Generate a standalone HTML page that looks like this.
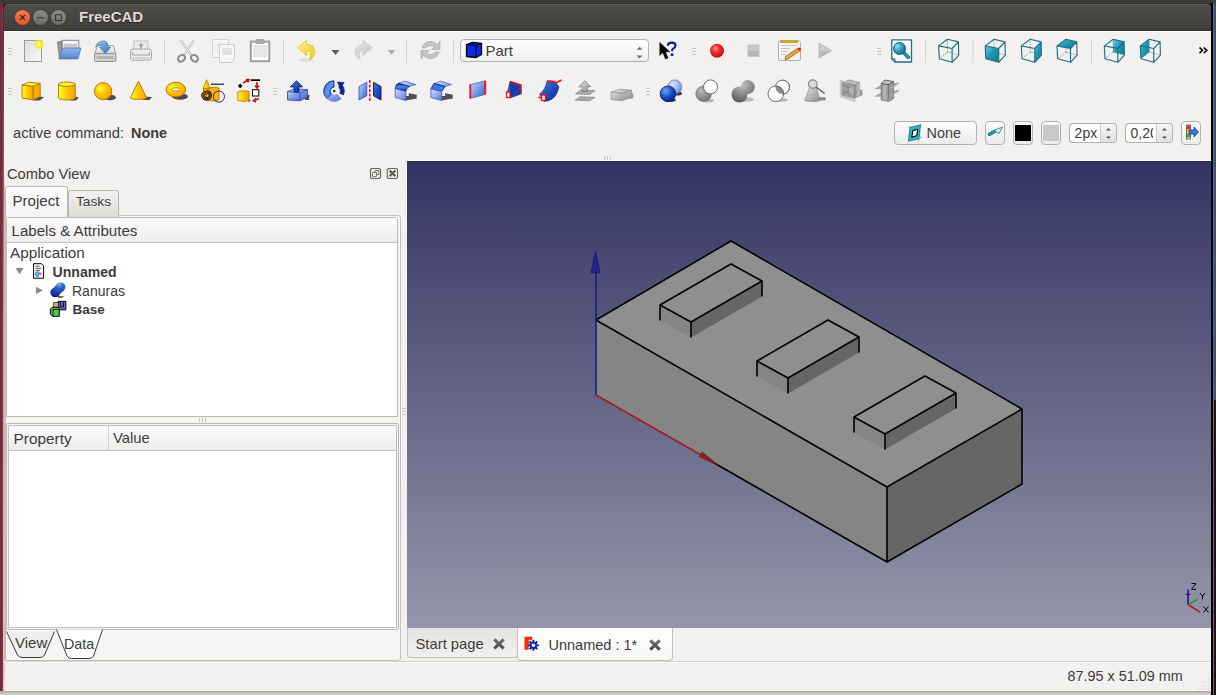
<!DOCTYPE html>
<html><head><meta charset="utf-8">
<style>
*{box-sizing:border-box}
html,body{margin:0;padding:0}
body{width:1216px;height:695px;overflow:hidden;position:relative;background:#f2f1f0;font-family:"Liberation Sans",sans-serif;color:#3c3c3c}
.a{position:absolute}
.t{position:absolute;white-space:pre;line-height:1}
svg{position:absolute;overflow:visible}
</style></head><body>
<!-- outer desktop edges -->
<div class="a" style="left:0;top:0;width:1216px;height:3px;background:#3b3a36"></div>
<div class="a" style="left:0;top:3px;width:2px;height:688px;background:#6e2c45"></div><div class="a" style="left:0;top:691px;width:3px;height:4px;background:#707890"></div>
<div class="a" style="left:2px;top:3px;width:1px;height:688px;background:#b8242a"></div>
<div class="a" style="left:3px;top:3px;width:1px;height:688px;background:linear-gradient(#2f3a36 0,#2f3a36 4%,#a9b0ad 50%,#c8cfcc 100%)"></div>
<div class="a" style="left:3px;top:3px;width:5px;height:3px;background:#6a0a10;clip-path:polygon(0 0,100% 0,0 100%)"></div>
<div class="a" style="left:1211px;top:3px;width:2px;height:692px;background:#000"></div>
<div class="a" style="left:1213px;top:3px;width:1px;height:692px;background:#6a6a6a"></div>
<div class="a" style="left:1214px;top:3px;width:2px;height:397px;background:#32528f"></div>
<div class="a" style="left:1214px;top:400px;width:2px;height:295px;background:#2a0b1f"></div>
<div class="a" style="left:0;top:691px;width:1211px;height:4px;background:linear-gradient(#a9a8a4,#d9d8d5)"></div>

<!-- title bar -->
<div class="a" style="left:1203px;top:3px;width:8px;height:6px;background:#000"></div><div class="a" style="left:3px;top:3px;width:6px;height:6px;background:#3a1018"></div>
<div class="a" style="left:4px;top:3px;width:1207px;height:1px;background:#33322e"></div><div class="a" style="left:4px;top:4px;width:1207px;height:27px;background:linear-gradient(#4e4d48,#484742 40%,#3f3e3a 95%,#2f2e2a);border-top:1px solid #5f5d58;border-radius:4px 4px 0 0"></div>
<div class="t" style="left:79px;top:9.3px;font-size:15px;font-weight:bold;color:#dfdbd2;text-shadow:0 1px 1px #262522">FreeCAD</div>

<!-- main window bg -->
<div class="a" style="left:4px;top:31px;width:1207px;height:660px;background:#f2f1f0"></div>
<div class="a" style="left:4px;top:31px;width:1207px;height:1px;background:#fcfcfb"></div>
<div class="a" style="left:4px;top:31px;width:1px;height:660px;background:linear-gradient(#fcfcfb 0,#fcfcfb 20%,#c0bcb8 25%,#c0bcb8 95%,#e8e8e8)"></div>



<!-- ===== TOOLBAR ROW 1 ===== -->
<svg style="left:0;top:0" width="1216" height="120">
<defs>
<linearGradient id="gDoc" x1="0" y1="0" x2="1" y2="1"><stop offset="0" stop-color="#dcdcdc"/><stop offset="1" stop-color="#fafafa"/></linearGradient>
<radialGradient id="gGlow"><stop offset="0" stop-color="#ffffe8"/><stop offset=".25" stop-color="#fbf84a"/><stop offset=".6" stop-color="#f3ee28" stop-opacity=".9"/><stop offset="1" stop-color="#f5ee20" stop-opacity="0"/></radialGradient>
<linearGradient id="gFold" x1="0" y1="0" x2="0" y2="1"><stop offset="0" stop-color="#8fb6e6"/><stop offset="1" stop-color="#4f86cc"/></linearGradient>
<linearGradient id="gDrive" x1="0" y1="0" x2="0" y2="1"><stop offset="0" stop-color="#fdfdfd"/><stop offset="1" stop-color="#d6d6d6"/></linearGradient>
<linearGradient id="gArrB" x1="0" y1="0" x2="1" y2="1"><stop offset="0" stop-color="#a9c6ea"/><stop offset="1" stop-color="#2d6cbd"/></linearGradient>
<linearGradient id="gUndo" x1="0" y1="0" x2="1" y2="1"><stop offset="0" stop-color="#fff59a"/><stop offset="1" stop-color="#e8cc10"/></linearGradient>
<linearGradient id="gRedo" x1="0" y1="0" x2="1" y2="1"><stop offset="0" stop-color="#e8e8e8"/><stop offset="1" stop-color="#bdbdbd"/></linearGradient>
<radialGradient id="gRec" cx=".4" cy=".35" r=".7"><stop offset="0" stop-color="#ff9a9a"/><stop offset=".4" stop-color="#ef2a2a"/><stop offset="1" stop-color="#b80f0f"/></radialGradient>
<radialGradient id="gTeal" cx=".3" cy=".3" r=".8"><stop offset="0" stop-color="#8fdcf2"/><stop offset=".6" stop-color="#2596b4"/><stop offset="1" stop-color="#11708a"/></radialGradient>
<linearGradient id="gTealF" x1="0" y1="0" x2="1" y2="1"><stop offset="0" stop-color="#6fcbe8"/><stop offset=".5" stop-color="#1e95b3"/><stop offset="1" stop-color="#137a93"/></linearGradient>

</defs>
<!-- grip -->
<g fill="#c9c6c2"><rect x="8" y="48" width="4" height="1"/><rect x="8" y="51" width="4" height="1"/><rect x="8" y="54" width="4" height="1"/></g>
<!-- new doc -->
<rect x="24.5" y="40.5" width="17" height="21" fill="url(#gDoc)" stroke="#9a9a9a" stroke-width="1"/>
<circle cx="39.2" cy="44.4" r="5.8" fill="url(#gGlow)"/>
<!-- open -->
<path d="M57.5 42 L62 41 L62 58 L59.5 59 Z" fill="#9a9a9a" stroke="#707070" stroke-width=".8"/>
<rect x="62.3" y="40.3" width="16.5" height="12" fill="#f0f0f0" stroke="#8a8a8a" stroke-width="1"/>
<rect x="64" y="42.5" width="13" height="5.5" fill="#c8c8c8"/><rect x="64" y="42" width="13" height="1.5" fill="#fff"/>
<path d="M62.6 48.1 L81 48.1 L77.9 58.9 L59.2 58.9 Z" fill="url(#gFold)" stroke="#4a7ab8" stroke-width=".8"/>
<!-- save -->
<path d="M97.6 45.5 L113.2 45.5 L115.8 53.6 L94.5 53.6 Z" fill="url(#gDrive)" stroke="#a0a0a0" stroke-width="1"/>
<rect x="94.5" y="53.6" width="21.3" height="7.9" rx="1" fill="#d4d4d4" stroke="#8e8e8e" stroke-width="1"/>
<rect x="96.5" y="56" width="17" height="3" fill="#b3b3b3"/>
<path d="M95.5 47 Q98 40 105 41 Q108.5 42 108 47 L111 47 L105.3 53.4 L99 47 L102.5 47 Q102.5 44 99 45 Z" fill="url(#gArrB)" stroke="#3a6fb0" stroke-width=".6"/>
<!-- print -->
<rect x="134" y="41" width="14" height="9" fill="#ececec" stroke="#bdbdbd" stroke-width="1"/>
<path d="M141 42.5 L138 46 L140 46 L140 49 L142 49 L142 46 L144 46 Z" fill="#a8a8a8"/>
<rect x="130.5" y="49" width="21" height="11.5" rx="2.5" fill="#ededed" stroke="#a8a8a8" stroke-width="1"/>
<path d="M132.5 52 L132.5 55 L149.5 55 L149.5 52" fill="none" stroke="#a0a0a0" stroke-width="1"/>
<rect x="131" y="57" width="20" height="3.5" fill="#d6d6d6"/>
<!-- sep -->
<rect x="164" y="39" width="1" height="24" fill="#d6d3cf"/>
<!-- cut -->
<path d="M180.5 39.8 L191 55 M194 39.8 L184 55" stroke="#b8b8b8" stroke-width="2.2" fill="none"/>
<path d="M180.5 39.8 L191 55 M194 39.8 L184 55" stroke="#f2f2f2" stroke-width="1" fill="none"/>
<ellipse cx="181.5" cy="58.3" rx="3.8" ry="3" transform="rotate(-40 181.5 58.3)" fill="none" stroke="#8a8a8a" stroke-width="2"/>
<ellipse cx="194.5" cy="58.3" rx="3.8" ry="3" transform="rotate(40 194.5 58.3)" fill="none" stroke="#8a8a8a" stroke-width="2"/>
<!-- copy -->
<rect x="212.5" y="39.5" width="16" height="18" fill="#f6f6f6" stroke="#d2d2d2" stroke-width="1"/>
<path d="M214 44 H222 M214 46 H222 M214 48 H222 M214 50 H222 M214 52 H222" stroke="#e2e2e2" stroke-width=".8"/>
<path d="M219.5 44.5 L234.5 44.5 L234.5 59 L231 62.5 L219.5 62.5 Z" fill="#f7f7f7" stroke="#cfcfcf" stroke-width="1"/>
<rect x="222" y="48" width="10" height="7" fill="#e0e0e0"/>
<!-- paste -->
<rect x="250.8" y="41.6" width="18.5" height="19.6" fill="#fbfbfb" stroke="#9e9e9e" stroke-width="2"/>
<rect x="253" y="45" width="14" height="12" fill="#e6e6e6"/>
<rect x="255.5" y="39" width="9" height="5" rx="1" fill="#a9a9a9"/>
<!-- sep -->
<rect x="283" y="39" width="1" height="24" fill="#d6d3cf"/>
<!-- undo -->
<ellipse cx="306" cy="60" rx="7" ry="1.6" fill="#000" opacity=".08"/>
<path d="M297.6 47.7 L306.8 40.3 L306.8 44.5 Q314.5 44.5 314.8 51.5 Q315 57 309.3 59.4 Q311.5 55.5 310.5 52.5 Q309.5 50.5 306.8 50.8 L306.8 55.7 Z" fill="url(#gUndo)" stroke="#d6c000" stroke-width=".7" stroke-linejoin="round"/>
<!-- dd1 -->
<path d="M331.5 50 L339.5 50 L335.5 55 Z" fill="#5a5a5a"/>
<!-- redo -->
<path d="M372.2 47.7 L363 40.3 L363 44.5 Q355.3 44.5 355 51.5 Q354.8 57 360.5 59.4 Q358.3 55.5 359.3 52.5 Q360.3 50.5 363 50.8 L363 55.7 Z" fill="url(#gRedo)" stroke="#c9c9c9" stroke-width=".7" stroke-linejoin="round"/>
<!-- dd2 -->
<path d="M387.6 50 L395.4 50 L391.5 55 Z" fill="#acacac"/>
<rect x="406" y="39" width="1" height="24" fill="#d6d3cf"/>
<!-- refresh -->
<path d="M422 48 Q424 41.5 430.5 41.5 Q435 41.5 437.5 44.5 L440 41 L440 49.5 L431.5 49.5 L434.5 47 Q433 45.5 430.5 45.5 Q427 45.5 426 48 Z" fill="#c4c4c4" stroke="#a9a9a9" stroke-width=".7"/>
<path d="M439 52 Q437 58.5 430.5 58.5 Q426 58.5 423.5 55.5 L421 59 L421 50.5 L429.5 50.5 L426.5 53 Q428 54.5 430.5 54.5 Q434 54.5 435 52 Z" fill="#c4c4c4" stroke="#a9a9a9" stroke-width=".7"/>
<rect x="453" y="39" width="1" height="24" fill="#d6d3cf"/>
<!-- workbench combo -->
<rect x="460.5" y="39.5" width="188" height="22" rx="3.5" fill="url(#gCombo)" stroke="#b4b1ac" stroke-width="1"/>
<linearGradient id="gCombo" x1="0" y1="0" x2="0" y2="1"><stop offset="0" stop-color="#ffffff"/><stop offset="1" stop-color="#eeeeed"/></linearGradient>
<path d="M466.5 44.5 L472.5 42.3 L481.5 43.3 L481.5 54.5 L476 57.5 L466.5 56.5 Z" fill="#0a28f0" stroke="#000" stroke-width="1.3" stroke-linejoin="round"/>
<path d="M466.5 44.5 L476 45.6 L481.5 43.3 M476 45.6 L476 57.5" fill="none" stroke="#000" stroke-width="1.1"/>
<path d="M636.7 49.8 L639.6 46.8 L642.5 49.8 Z" fill="#6e6e6e"/>
<path d="M636.7 55.6 L639.6 58.5 L642.5 55.6 Z" fill="#6e6e6e"/>
<!-- whats this -->
<path d="M659.8 42.5 L659.8 55.5 L662.8 52.5 L665.5 59 L668 58 L665.5 51.8 L669.8 51.8 Z" fill="#000" stroke="#000" stroke-width=".5" stroke-linejoin="round"/>
<path d="M667.8 45.8 Q668 42.6 671.8 42.6 Q675.5 42.6 675.5 45.6 Q675.5 47.6 673.2 48.6 Q672 49.2 672 51.2" fill="none" stroke="#0c1a8c" stroke-width="2.1"/>
<rect x="670.6" y="53.5" width="2.8" height="2.4" fill="#0c1a8c"/>
<!-- grip -->
<g fill="#c9c6c2"><rect x="692" y="48" width="4" height="1"/><rect x="692" y="51" width="4" height="1"/><rect x="692" y="54" width="4" height="1"/></g>
<!-- record -->
<circle cx="717" cy="50.7" r="7" fill="url(#gRec)"/>
<!-- stop -->
<rect x="748" y="45" width="11" height="11.3" fill="#c8c8c8" stroke="#bdbdbd" stroke-width=".8"/>
<rect x="748.5" y="51" width="10" height="5" fill="#b5b5b5"/>
<!-- macro edit -->
<rect x="778.5" y="41" width="22" height="19.5" rx="1.5" fill="#f4f4f4" stroke="#b0b0b0" stroke-width="1"/>
<rect x="780" y="40" width="18" height="3" fill="#c8a830"/>
<path d="M781 45.5 H797 M781 48.5 H790 M781 51.5 H788 M781 54.5 H786" stroke="#c6c6c6" stroke-width="1.2"/>
<path d="M785.5 56.5 L798 48 L800.5 50.5 L788 59 L785 59.5 Z" fill="#e8a838" stroke="#8a5a10" stroke-width=".7"/>
<circle cx="799.5" cy="49" r="1.6" fill="#e02020"/>
<!-- play -->
<path d="M819 43.2 L831.6 50.6 L819 58 Z" fill="#cdcdcd" stroke="#b0b0b0" stroke-width=".8"/>
<path d="M819.5 51 L830.5 51 L819.5 57.5 Z" fill="#b8b8b8"/>
<!-- grip -->
<g fill="#c9c6c2"><rect x="877" y="48" width="4" height="1"/><rect x="877" y="51" width="4" height="1"/><rect x="877" y="54" width="4" height="1"/></g>
<!-- fit -->
<path d="M891.8 39.8 L911.5 39.8 L911.5 62 L895 62 L891.8 58.8 Z" fill="#fff" stroke="#1f6f82" stroke-width="1.3" stroke-linejoin="round"/>
<path d="M891.8 58.8 L895 58.8 L895 62" fill="none" stroke="#1f6f82" stroke-width="1"/>
<path d="M903.5 52.5 L908.3 57.3" stroke="#145e70" stroke-width="3.6" stroke-linecap="round"/>
<path d="M903.5 52.5 L908.3 57.3" stroke="#2a9ab8" stroke-width="2" stroke-linecap="round"/>
<circle cx="899.5" cy="48.5" r="6" fill="url(#gTeal)" stroke="#0f5e72" stroke-width="1"/>
<rect x="925" y="39" width="1" height="24" fill="#d6d3cf"/>
<!-- iso -->
<g transform="translate(938.6 39.3)">
<path d="M8.9 0 L8.9 12.8 M8.9 12.8 L0.7 19.4 M8.9 12.8 L20.1 15.8" fill="none" stroke="#3a8396" stroke-width=".75" stroke-dasharray="1.2 1.1"/>
<path d="M0 6.6 L8.9 0 L19.8 2.6 L13.5 9.2 Z M13.5 9.2 L13.5 23 M0 6.6 L0.7 19.4 L13.5 23 L20.1 15.8 L19.8 2.6" fill="none" stroke="#1f6f82" stroke-width="1.15" stroke-linejoin="round"/>
</g>
<rect x="972.5" y="39" width="1" height="24" fill="#d6d3cf"/>
<!-- front -->
<g transform="translate(985.2 39.3)"><path d="M0 6.6 L13.5 9.2 L13.5 23 L0.7 19.4 Z" fill="url(#gTealF)"/>
<path d="M8.9 0 L8.9 12.8 M8.9 12.8 L0.7 19.4 M8.9 12.8 L20.1 15.8" fill="none" stroke="#3a8396" stroke-width=".75" stroke-dasharray="1.2 1.1"/>
<path d="M0 6.6 L8.9 0 L19.8 2.6 L13.5 9.2 Z M13.5 9.2 L13.5 23 M0 6.6 L0.7 19.4 L13.5 23 L20.1 15.8 L19.8 2.6" fill="none" stroke="#1f6f82" stroke-width="1.15" stroke-linejoin="round"/>
</g>
<!-- right -->
<g transform="translate(1021.3 39.3)"><path d="M13.5 9.2 L19.8 2.6 L20.1 15.8 L13.5 23 Z" fill="url(#gTealF)"/>
<path d="M8.9 0 L8.9 12.8 M8.9 12.8 L0.7 19.4 M8.9 12.8 L20.1 15.8" fill="none" stroke="#3a8396" stroke-width=".75" stroke-dasharray="1.2 1.1"/>
<path d="M0 6.6 L8.9 0 L19.8 2.6 L13.5 9.2 Z M13.5 9.2 L13.5 23 M0 6.6 L0.7 19.4 L13.5 23 L20.1 15.8 L19.8 2.6" fill="none" stroke="#1f6f82" stroke-width="1.15" stroke-linejoin="round"/>
</g>
<!-- top -->
<g transform="translate(1057 39.3)"><path d="M0 6.6 L8.9 0 L19.8 2.6 L13.5 9.2 Z" fill="url(#gTealF)"/>
<path d="M8.9 0 L8.9 12.8 M8.9 12.8 L0.7 19.4 M8.9 12.8 L20.1 15.8" fill="none" stroke="#3a8396" stroke-width=".75" stroke-dasharray="1.2 1.1"/>
<path d="M0 6.6 L8.9 0 L19.8 2.6 L13.5 9.2 Z M13.5 9.2 L13.5 23 M0 6.6 L0.7 19.4 L13.5 23 L20.1 15.8 L19.8 2.6" fill="none" stroke="#1f6f82" stroke-width="1.15" stroke-linejoin="round"/>
</g>
<rect x="1091" y="39" width="1" height="24" fill="#d6d3cf"/>
<!-- rear -->
<g transform="translate(1104.3 39.3)"><path d="M8.9 0 L19.8 2.6 L20.1 15.8 L8.9 12.8 Z" fill="url(#gTealF)"/>
<path d="M8.9 0 L8.9 12.8 M8.9 12.8 L0.7 19.4 M8.9 12.8 L20.1 15.8" fill="none" stroke="#3a8396" stroke-width=".75" stroke-dasharray="1.2 1.1"/>
<path d="M0 6.6 L8.9 0 L19.8 2.6 L13.5 9.2 Z M13.5 9.2 L13.5 23 M0 6.6 L0.7 19.4 L13.5 23 L20.1 15.8 L19.8 2.6" fill="none" stroke="#1f6f82" stroke-width="1.15" stroke-linejoin="round"/>
</g>
<!-- left -->
<g transform="translate(1140.3 39.3)"><path d="M0 6.6 L8.9 0 L8.9 12.8 L0.7 19.4 Z" fill="url(#gTealF)"/>
<path d="M8.9 0 L8.9 12.8 M8.9 12.8 L0.7 19.4 M8.9 12.8 L20.1 15.8" fill="none" stroke="#3a8396" stroke-width=".75" stroke-dasharray="1.2 1.1"/>
<path d="M0 6.6 L8.9 0 L19.8 2.6 L13.5 9.2 Z M13.5 9.2 L13.5 23 M0 6.6 L0.7 19.4 L13.5 23 L20.1 15.8 L19.8 2.6" fill="none" stroke="#1f6f82" stroke-width="1.15" stroke-linejoin="round"/>
</g>
<!-- chevron -->
<path d="M1199.5 47.5 L1202.5 50.3 L1199.5 53.1 M1203.8 47.5 L1206.8 50.3 L1203.8 53.1" fill="none" stroke="#000" stroke-width="1.6"/>
</svg>


<!-- title buttons -->
<svg style="left:0;top:0" width="80" height="32">
<defs>
<linearGradient id="gClose" x1="0" y1="0" x2="0" y2="1"><stop offset="0" stop-color="#f47a50"/><stop offset="1" stop-color="#e9541f"/></linearGradient>
<linearGradient id="gMin" x1="0" y1="0" x2="0" y2="1"><stop offset="0" stop-color="#8d8b86"/><stop offset="1" stop-color="#6c6a65"/></linearGradient>
</defs>
<circle cx="22.5" cy="17.5" r="8.3" fill="#3a3935"/>
<circle cx="22.5" cy="17.5" r="7.6" fill="url(#gClose)"/>
<path d="M20 15 L25 20 M25 15 L20 20" stroke="#3b2a22" stroke-width="1.2"/>
<circle cx="40.5" cy="17.5" r="8.3" fill="#3a3935"/>
<circle cx="40.5" cy="17.5" r="7.6" fill="url(#gMin)"/>
<rect x="37" y="17.1" width="7" height="1.2" fill="#3a3935"/>
<circle cx="58.5" cy="17.5" r="8.3" fill="#3a3935"/>
<circle cx="58.5" cy="17.5" r="7.6" fill="url(#gMin)"/>
<rect x="55.6" y="14.7" width="5.8" height="5.8" fill="none" stroke="#3a3935" stroke-width="1.1"/>
</svg>
<div class="t" style="left:485.5px;top:43.2px;font-size:15px">Part</div>


<!-- ===== TOOLBAR ROW 2 ===== -->
<svg style="left:0;top:0" width="1216" height="120">
<defs>
<linearGradient id="gY" x1="0" y1="0" x2="1" y2="0"><stop offset="0" stop-color="#ffff28"/><stop offset=".55" stop-color="#ffc000"/><stop offset="1" stop-color="#ffa400"/></linearGradient>
<linearGradient id="gYt" x1="0" y1="0" x2="1" y2="0"><stop offset="0" stop-color="#fff020"/><stop offset="1" stop-color="#ffd000"/></linearGradient>
<radialGradient id="gYs" cx=".35" cy=".35" r=".7"><stop offset="0" stop-color="#ffff30"/><stop offset=".5" stop-color="#ffc400"/><stop offset="1" stop-color="#ffa000"/></radialGradient>
<linearGradient id="gB" x1="0" y1="0" x2="1" y2="1"><stop offset="0" stop-color="#c8dcfa"/><stop offset=".6" stop-color="#6a8ee0"/><stop offset="1" stop-color="#4060c8"/></linearGradient>
<linearGradient id="gBd" x1="0" y1="0" x2="1" y2="1"><stop offset="0" stop-color="#3a78e0"/><stop offset="1" stop-color="#0a2a9a"/></linearGradient>
<radialGradient id="gBs" cx=".35" cy=".3" r=".75"><stop offset="0" stop-color="#70a8f0"/><stop offset=".55" stop-color="#1850c0"/><stop offset="1" stop-color="#0a1e80"/></radialGradient>
<radialGradient id="gBsl" cx=".35" cy=".3" r=".75"><stop offset="0" stop-color="#d8e6fa"/><stop offset="1" stop-color="#6a8ee0"/></radialGradient>
<radialGradient id="gGs" cx=".35" cy=".3" r=".8"><stop offset="0" stop-color="#b8b8b8"/><stop offset="1" stop-color="#6e6e6e"/></radialGradient>
<linearGradient id="gG" x1="0" y1="0" x2="1" y2="1"><stop offset="0" stop-color="#e6e6e6"/><stop offset="1" stop-color="#8a8a8a"/></linearGradient>
</defs>
<g fill="#c9c6c2"><rect x="8" y="88" width="4" height="1"/><rect x="8" y="91" width="4" height="1"/><rect x="8" y="94" width="4" height="1"/></g>
<!-- box -->
<path d="M33 96 L44 97 L40 100.5 L33 100.5 Z" fill="#4e4e4e"/>
<path d="M22.1 85 L33.2 86.3 L33.2 99.8 L22.1 98.2 Z" fill="url(#gY)" stroke="#a87400" stroke-width=".9" stroke-linejoin="round"/>
<path d="M33.2 86.3 L40.2 83.4 L40.2 96.6 L33.2 99.8 Z" fill="#ffaa00" stroke="#a87400" stroke-width=".9" stroke-linejoin="round"/>
<path d="M22.1 85 L28.7 82.2 L40.2 83.4 L33.2 86.3 Z" fill="#fff030" stroke="#a87400" stroke-width=".9" stroke-linejoin="round"/>
<!-- cylinder -->
<path d="M72 96 L79 97.5 L76 100.5 L70 100.5 Z" fill="#4e4e4e"/>
<path d="M58.5 84.2 L58.5 97.8 A8.35 2.2 0 0 0 75.2 97.8 L75.2 84.2 Z" fill="url(#gY)" stroke="#a87400" stroke-width=".9"/>
<ellipse cx="66.85" cy="84.2" rx="8.35" ry="2.2" fill="#fff030" stroke="#a87400" stroke-width=".9"/>
<!-- sphere -->
<ellipse cx="110" cy="97.5" rx="6" ry="2.8" fill="#4e4e4e"/>
<circle cx="103.1" cy="91.2" r="8.6" fill="url(#gYs)" stroke="#a87400" stroke-width=".9"/>
<!-- cone -->
<path d="M144 96.5 L152 97 L149.5 100 L143 100 Z" fill="#4e4e4e"/>
<path d="M138.5 81.3 L146.6 97.8 A8.15 1.6 0 0 1 130.3 97.8 Z" fill="url(#gY)" stroke="#a87400" stroke-width=".9" stroke-linejoin="round"/>
<!-- torus -->
<ellipse cx="180" cy="96.5" rx="8" ry="3.3" fill="#4e4e4e"/>
<ellipse cx="175.8" cy="89.6" rx="9.8" ry="7.4" fill="url(#gYs)" stroke="#a87400" stroke-width=".9"/>
<ellipse cx="175.8" cy="89.4" rx="4.4" ry="1.6" fill="#f0efee" stroke="#b88000" stroke-width=".8"/>
<!-- primitives -->
<path d="M203.5 88.3 L216.5 87.2 L219 88 L219 100 L213 101 L203.5 99.5 Z" fill="#ffb000" stroke="#a87400" stroke-width=".8"/>
<path d="M206.6 79.7 L210.3 88.3 L203 88.3 Z" fill="url(#gY)" stroke="#a87400" stroke-width=".7"/>
<rect x="211" y="83.6" width="13" height="1.2" fill="#1a1a1a"/>
<circle cx="206.6" cy="95.3" r="5" fill="#ffb000"/>
<path d="M206.6 90.5 A4.8 4.8 0 1 1 201.8 95.3 L201.8 94.5" fill="none" stroke="#111" stroke-width="1.1"/>
<path d="M201.8 94.5 A3.6 3.6 0 0 1 206.6 91.7 A3.5 3.5 0 1 1 203.3 95.5 A2.2 2.2 0 0 1 206.6 93 A2.3 2.3 0 1 1 204.6 95.5 A1.1 1.1 0 0 1 206.8 95" fill="none" stroke="#111" stroke-width="1"/>
<circle cx="218.9" cy="96.6" r="5.6" fill="none" stroke="#2a2f80" stroke-width="1"/>
<!-- shape builder -->
<path d="M240.2 83.5 L242.5 85.9 L240.2 88.3 L237.9 85.9 Z" fill="#000"/>
<path d="M243 83 L248 80 M246 79.5 L249 79.6 L248 82.3" stroke="#d01010" stroke-width="1.6" fill="none"/>
<rect x="250.8" y="79.3" width="9.2" height="1.7" fill="#000"/>
<path d="M257 82 L257 87 M255 85.5 L257 88 L259 85.5" stroke="#d01010" stroke-width="1.6" fill="none"/>
<rect x="252.5" y="89.7" width="6.3" height="6.3" fill="#fff" stroke="#000" stroke-width="1"/>
<path d="M259 98.5 L254 100.5 M256 98.3 L253.5 100.7 L256 102" stroke="#d01010" stroke-width="1.6" fill="none"/>
<path d="M249 99.5 L251 101 L248 102 Z" fill="#4e4e4e"/>
<path d="M237.8 92 L241.5 90.8 L249 91.2 L249 100 L245 101.6 L237.8 100.5 Z" fill="url(#gY)" stroke="#a87400" stroke-width=".8"/>
<g fill="#c9c6c2"><rect x="273" y="88" width="4" height="1"/><rect x="273" y="91" width="4" height="1"/><rect x="273" y="94" width="4" height="1"/></g>
<!-- extrude -->
<path d="M305 94 L309.5 95 L309 100 L305 100 Z" fill="#4e4e4e"/>
<path d="M287.5 91.5 L294.5 89 L307.5 89.5 L307.5 97 L300 100.8 L287.5 100 Z" fill="url(#gB)" stroke="#3040b0" stroke-width=".8" stroke-linejoin="round"/>
<path d="M287.5 91.5 L300 93 L307.5 89.5 M300 93 L300 100.8" fill="none" stroke="#3040b0" stroke-width=".8"/>
<path d="M296.5 80.7 L302.7 86.9 L299 86.9 L299 92 L294 92 L294 86.9 L290.2 86.9 Z" fill="url(#gBd)" stroke="#0a1a70" stroke-width=".8" stroke-linejoin="round"/>
<!-- revolve -->
<linearGradient id="gRv1" x1="0" y1="0" x2="1" y2="1"><stop offset="0" stop-color="#3a6ad8"/><stop offset=".5" stop-color="#5a9af0"/><stop offset="1" stop-color="#2a58c8"/></linearGradient>
<linearGradient id="gRv2" x1="0" y1="0" x2="1" y2="1"><stop offset="0" stop-color="#a8bcf0"/><stop offset="1" stop-color="#5a70d8"/></linearGradient>
<path d="M327.36 98.80 A10.3 10.3 0 0 1 333.84 80.81 L334.06 87.00 A4.1 4.1 0 0 0 331.48 94.17 Z" fill="url(#gRv1)" stroke="#0a1a60" stroke-width=".9" stroke-linejoin="round"/>
<path d="M341.09 98.75 A10.3 10.3 0 0 1 327.36 98.80 L331.48 94.17 A4.1 4.1 0 0 0 336.94 94.15 Z" fill="url(#gRv2)" stroke="#6a70d8" stroke-width=".7" stroke-linejoin="round"/>
<path d="M341.86 84.67 A10.0 10.0 0 0 1 343.47 94.85 L339.95 93.42 A6.2 6.2 0 0 0 338.95 87.11 Z" fill="#0a2a9a" stroke="#08166a" stroke-width=".7"/>
<path d="M337.4 82.0 L344.2 82.6 L340.2 88.2 Z" fill="#0a2a9a" stroke="#08166a" stroke-width=".6" stroke-linejoin="round"/>
<circle cx="334.2" cy="91.1" r="1.2" fill="#000a30"/>
<!-- mirror -->
<path d="M359 86.5 L366.8 82.3 L366.8 95.8 L359 100 Z" fill="url(#gB)" stroke="#3a4ac0" stroke-width=".8"/>
<path d="M373.5 82.3 L381 86.5 L381 100 L373.5 95.8 Z" fill="url(#gBd)" stroke="#0a1460" stroke-width=".9"/>
<path d="M369.8 80 L369.8 102.5" stroke="#ff1010" stroke-width="1.5" stroke-dasharray="3 1.5"/>
<!-- fillet -->
<linearGradient id="gFt" x1="0" y1="0" x2="1" y2="0"><stop offset="0" stop-color="#d6e4fa"/><stop offset="1" stop-color="#7890e0"/></linearGradient>
<linearGradient id="gFb" x1="0" y1="0" x2="0" y2="1"><stop offset="0" stop-color="#0a2aa8"/><stop offset=".45" stop-color="#4a8ae8"/><stop offset="1" stop-color="#08208a"/></linearGradient>
<linearGradient id="gFf" x1="0" y1="0" x2="1" y2="1"><stop offset="0" stop-color="#d0e2fb"/><stop offset="1" stop-color="#5a78d8"/></linearGradient>
<path d="M408.8 93.3 L416.7 94.8 L416.7 98.5 L405.9 100.6 L405.9 96 L408.8 96 Z" fill="#4e4e4e"/>
<path d="M398.5 83.2 L405 81 L416 84.6 L409.5 86.5 Z" fill="url(#gFt)" stroke="#5a60d8" stroke-width=".7" stroke-linejoin="round"/>
<path d="M395.2 88.8 Q395.5 84 398.5 83.2 L409.5 86.5 Q406.2 87.8 405.9 91.4 Z" fill="url(#gFb)" stroke="#0a1060" stroke-width=".7" stroke-linejoin="round"/>
<path d="M395.2 88.8 L405.9 91.4 L405.9 100.6 L395.2 97.5 Z" fill="url(#gFf)" stroke="#4a50d0" stroke-width=".8" stroke-linejoin="round"/>
<!-- chamfer -->
<path d="M445.2 93.3 L452.8 94.8 L452.8 98.5 L441.7 100.6 L441.7 96 L445.2 96 Z" fill="#4e4e4e"/>
<path d="M434.1 83.5 L440.9 81 L451.7 84.6 L445.2 86.4 Z" fill="url(#gFt)" stroke="#5a60d8" stroke-width=".7" stroke-linejoin="round"/>
<path d="M430.9 88.8 L434.1 83.5 L445.2 86.4 L441.7 91.4 Z" fill="#3a7ae0" stroke="#0a1060" stroke-width=".8" stroke-linejoin="round"/>
<path d="M430.9 88.8 L441.7 91.4 L441.7 100.6 L430.9 97.5 Z" fill="url(#gFf)" stroke="#4a50d0" stroke-width=".8" stroke-linejoin="round"/>
<!-- ruled -->
<path d="M470.3 84.6 L485.3 80.8 L485.3 94.4 L470.3 98.4 Z" fill="url(#gB)" stroke="#3a4ac0" stroke-width=".6"/>
<path d="M470.3 84.6 L470.3 98.4 M485.3 80.8 L485.3 94.4" stroke="#ff0a0a" stroke-width="1.8"/>
<!-- loft -->
<path d="M510 81.5 L521 85 L521 94 L510 98 L506.5 96 Z" fill="url(#gBd)" stroke="#1a2a90" stroke-width=".6"/>
<path d="M510 81.5 L521 85 L510 98 Z" fill="#1a3aa8"/>
<path d="M510 81.5 L521 85 L521 94" fill="none" stroke="#ff0a0a" stroke-width="1.5"/>
<rect x="506.5" y="92" width="3.5" height="5.5" fill="#fff" stroke="#ff0a0a" stroke-width="1.3"/>
<!-- sweep -->
<path d="M547 81 Q545.5 90 539.5 94 L544 101.5 Q556 101 559 87 L555 81.5 Z" fill="url(#gBd)" stroke="#1a2a90" stroke-width=".6"/>
<path d="M547 81 L555 81.5" stroke="#ff0a0a" stroke-width="1.5"/>
<path d="M555 83.5 L561.5 80" stroke="#ff0a0a" stroke-width="1.6"/>
<rect x="541.5" y="95" width="4" height="5.5" fill="#fff" stroke="#ff0a0a" stroke-width="1.4"/>
<path d="M538.5 97.5 L541.5 97.5" stroke="#ff0a0a" stroke-width="1.6"/>
<!-- offset -->
<path d="M575.5 94 L580.5 90 L595 90.5 L590 94.5 Z" fill="#a9a9a9" stroke="#7a7a7a" stroke-width=".6" stroke-linejoin="round"/>
<path d="M575.2 100.2 L580.3 96.7 L595.2 97.3 L589.5 100.8 Z" fill="#a9a9a9" stroke="#7a7a7a" stroke-width=".6" stroke-linejoin="round"/>
<path d="M584.8 80.6 L590.8 86.9 L587.3 86.9 L587.3 91.5 L582.3 91.5 L582.3 86.9 L578.8 86.9 Z" fill="url(#gG)" stroke="#6a6a6a" stroke-width=".6" stroke-linejoin="round"/>
<!-- thickness -->
<path d="M630 93 L633.4 93.5 L633.4 98 L630 99 Z" fill="#9a9a9a"/>
<path d="M611 92 L620 89.2 L631.5 90.2 L631.5 97.5 L622 100.8 L611 99.5 Z" fill="url(#gG)" stroke="#8a8a8a" stroke-width=".6"/>
<path d="M611 92 L622 93.3 L631.5 90.2" fill="none" stroke="#8a8a8a" stroke-width=".7"/>
<g fill="#c9c6c2"><rect x="646" y="88" width="4" height="1"/><rect x="646" y="91" width="4" height="1"/><rect x="646" y="94" width="4" height="1"/></g>
<!-- boolean -->
<ellipse cx="677" cy="93.5" rx="5" ry="2" fill="#3a3a3a"/>
<circle cx="674.8" cy="86.9" r="7" fill="url(#gBsl)" stroke="#6a7ad8" stroke-width=".8"/>
<ellipse cx="670" cy="100" rx="6" ry="2" fill="#3a3a3a"/>
<circle cx="667.9" cy="93.8" r="7.8" fill="url(#gBs)" stroke="#0a1a70" stroke-width=".8"/>
<!-- cut -->
<ellipse cx="708" cy="100.5" rx="6" ry="1.8" fill="#8a8a8a" opacity=".6"/>
<circle cx="703.6" cy="93.8" r="7.8" fill="url(#gGs)" stroke="#6a6a6a" stroke-width=".6"/>
<circle cx="710.5" cy="86.9" r="7" fill="#fff" stroke="#6a6a6a" stroke-width="1"/>
<!-- fuse -->
<radialGradient id="gFuse" gradientUnits="userSpaceOnUse" cx="742" cy="84" r="18"><stop offset="0" stop-color="#c4c4c4"/><stop offset="1" stop-color="#5e5e5e"/></radialGradient>
<ellipse cx="746" cy="99.5" rx="8" ry="2.2" fill="#8a8a8a" opacity=".55"/>
<circle cx="747.7" cy="87.1" r="7" fill="url(#gFuse)"/>
<circle cx="739.5" cy="94.5" r="8" fill="url(#gFuse)"/>
<path d="M742 89 L747 92 L742 95 Z" fill="url(#gFuse)"/>
<!-- common -->
<clipPath id="cpC1"><circle cx="782.5" cy="87.1" r="7"/></clipPath>
<ellipse cx="782" cy="100" rx="6" ry="1.8" fill="#8a8a8a" opacity=".55"/>
<circle cx="782.5" cy="87.1" r="7" fill="#fff" stroke="#707070" stroke-width="1"/>
<circle cx="775.8" cy="93.8" r="7.8" fill="#fff" stroke="#707070" stroke-width="1"/>
<circle cx="775.8" cy="93.8" r="7.8" fill="#8e8e8e" stroke="#6a6a6a" stroke-width="1" clip-path="url(#cpC1)"/>
<path d="M782.5 80.1 A7 7 0 0 1 782.5 94.1" fill="none" stroke="#707070" stroke-width="1"/>
<!-- section -->
<path d="M818 97 L826 97.5 L825 100.5 L818 100.5 Z" fill="#8a8a8a"/>
<path d="M810 86.5 L816 86.5 L820 100.5 A8 1.5 0 0 1 804.7 100.5 Z" fill="url(#gG)" stroke="#7a7a7a" stroke-width=".6"/>
<circle cx="812.8" cy="84.1" r="4.3" fill="#d8d8d8" stroke="#8a8a8a" stroke-width="1.2"/>
<path d="M816 87 L824.7 93.5" stroke="#555" stroke-width="1.2"/>
<!-- cross sections -->
<linearGradient id="gCs" x1="0" y1="0" x2="1" y2="0"><stop offset="0" stop-color="#8a8a8a"/><stop offset="1" stop-color="#c8c8c8"/></linearGradient>
<path d="M840.3 80.3 L843 81 L843 96 L855.2 99.8 L855.2 101.5 L840.3 96.8 Z" fill="#d8d8d8" stroke="#a8a8a8" stroke-width=".6"/>
<path d="M859.6 89.6 L862.4 89.6 L862.4 95.5 L859.6 96.1 Z" fill="#9a9a9a"/>
<path d="M842 82.8 L848.8 79.8 L859.6 82.2 L854.5 85 Z" fill="#b8b8b8" stroke="#8a8a8a" stroke-width=".5"/>
<path d="M854.5 85 L859.6 82.2 L859.6 96.1 L854.5 98.3 Z" fill="url(#gCs)" stroke="#8a8a8a" stroke-width=".5"/>
<path d="M842 82.8 L854.5 85 L854.5 98.3 L842 95 Z" fill="#a4a4a4" stroke="#7a7a7a" stroke-width=".6"/>
<path d="M843.5 84.5 L853 86.2 L853 96.5 L843.5 93.8 Z" fill="#9a9a9a"/>
<path d="M843.5 84.5 L848.8 88 L853 86.2 M848.8 88 L848.8 91.7 L843.5 93.8 M848.8 91.7 L853 96.5" fill="none" stroke="#6e6e6e" stroke-width=".8"/>
<path d="M848.8 88 L853 86.2 L853 96.5 L848.8 91.7 Z" fill="#b4b4b4"/>
<!-- compound -->
<linearGradient id="gCp" x1="0" y1="0" x2="1" y2="0"><stop offset="0" stop-color="#8e8e8e"/><stop offset=".5" stop-color="#bcbcbc"/><stop offset="1" stop-color="#8a8a8a"/></linearGradient>
<path d="M875.4 88.8 L883 84.2 L899 83.1 L891.5 88.3 Z" fill="#b0b0b0" stroke="#8a8a8a" stroke-width=".6" stroke-linejoin="round"/>
<path d="M875.4 96.3 L883 91.7 L899 90.6 L891.5 95.8 Z" fill="#b0b0b0" stroke="#8a8a8a" stroke-width=".6" stroke-linejoin="round"/>
<path d="M881.1 83.5 L888.5 84.6 L888.5 101.5 L881.1 100 Z" fill="url(#gCp)" stroke="#6a6a6a" stroke-width=".6"/>
<path d="M888.5 84.6 L893.5 81.5 L893.5 98.5 L888.5 101.5 Z" fill="#9a9a9a" stroke="#6a6a6a" stroke-width=".6"/>
<path d="M881.1 83.5 L885 80 L893.5 81.5 L888.5 84.6 Z" fill="#c0c0c0" stroke="#5a5a5a" stroke-width=".9" stroke-linejoin="round"/>
<path d="M888.5 88.3 L899 83.1 L891.5 88.3 Z M888.5 95.8 L899 90.6 L891.5 95.8 Z" fill="#b0b0b0"/>
<path d="M884 99.5 L896 96.5 L892 100.5 L886 101.5 Z" fill="#9a9a9a" opacity=".7"/>
</svg>

<!-- active command row -->
<div class="t" style="left:13px;top:125.6px;font-size:14.7px">active command:</div>
<div class="t" style="left:131px;top:125.8px;font-size:14.4px;font-weight:bold">None</div>


<!-- draft tray right -->
<svg style="left:880px;top:110px" width="336" height="45">
<defs>
<linearGradient id="gBtn" x1="0" y1="0" x2="0" y2="1"><stop offset="0" stop-color="#fdfdfd"/><stop offset="1" stop-color="#ecebea"/></linearGradient>
<linearGradient id="gSpinR" x1="0" y1="0" x2="0" y2="1"><stop offset="0" stop-color="#f7f7f6"/><stop offset="1" stop-color="#e2e1df"/></linearGradient>
</defs>
<rect x="14.5" y="11.5" width="82" height="23" rx="3.5" fill="url(#gBtn)" stroke="#b4b1ac"/>
<!-- plane icon -->
<path d="M30 17.5 L40.5 14.8 L39 28.8 L28.5 31 Z" fill="#2ab8c8" stroke="#0d6a78" stroke-width=".8" stroke-linejoin="round"/>
<path d="M32.8 20.8 L37.8 19.2 L36.8 25.6 L31.8 27.4 Z" fill="#fff" stroke="#000" stroke-width="1.1" stroke-linejoin="round"/>
<path d="M29 16 L30.5 19 M41.5 14 L40 17 M28 32.5 L29 29.5 M38.5 31.5 L39 28 M27.5 26 L30 25.5 M40 27.5 L42 27" stroke="#1c8a9a" stroke-width=".6"/>
<rect x="105.5" y="11.5" width="19" height="23" rx="3.5" fill="url(#gBtn)" stroke="#b4b1ac"/>
<path d="M109.5 24.2 L115.2 21" stroke="#0a6a70" stroke-width="3.4" stroke-linecap="round"/>
<path d="M109.5 24.2 L115.2 21" stroke="#20b0b0" stroke-width="1.8" stroke-linecap="round"/>
<path d="M113.5 20.5 L122.5 17 L119 23.5 Z" fill="#c8f0ea" stroke="#1a7a78" stroke-width=".8" stroke-linejoin="round"/>
<rect x="133.5" y="11.5" width="19" height="23" rx="3.5" fill="url(#gBtn)" stroke="#b4b1ac"/>
<rect x="135" y="15" width="16" height="16" fill="#000"/>
<rect x="161.5" y="11.5" width="19" height="23" rx="3.5" fill="url(#gBtn)" stroke="#b4b1ac"/>
<rect x="163" y="15" width="16" height="16" fill="#c8c8c8"/>
<!-- spin 2px -->
<rect x="189.5" y="13.5" width="47" height="19" rx="3" fill="#fff" stroke="#b4b1ac"/>
<path d="M220.5 14 L236 14 L236 32 L220.5 32 Z" fill="url(#gSpinR)"/>
<path d="M220.5 14 L220.5 32" stroke="#cdcac5"/>
<rect x="189.5" y="13.5" width="47" height="19" rx="3" fill="none" stroke="#b4b1ac"/>
<path d="M226 20.5 L228.5 18 L231 20.5 Z M226 26.5 L228.5 29 L231 26.5 Z" fill="#555"/>
<!-- spin 0,20 -->
<rect x="245.5" y="13.5" width="47" height="19" rx="3" fill="#fff" stroke="#b4b1ac"/>
<path d="M276.5 14 L292 14 L292 32 L276.5 32 Z" fill="url(#gSpinR)"/>
<path d="M276.5 14 L276.5 32" stroke="#cdcac5"/>
<rect x="245.5" y="13.5" width="47" height="19" rx="3" fill="none" stroke="#b4b1ac"/>
<path d="M282 20.5 L284.5 18 L287 20.5 Z M282 26.5 L284.5 29 L287 26.5 Z" fill="#555"/>
<!-- last button -->
<rect x="301.5" y="11.5" width="19" height="23" rx="3.5" fill="url(#gBtn)" stroke="#b4b1ac"/>
<rect x="307" y="15.5" width="3" height="4" fill="#ff2020"/>
<rect x="307" y="19.5" width="3" height="4" fill="#ffd800"/>
<rect x="307" y="23.5" width="3" height="4" fill="#20c020"/>
<rect x="306.5" y="15" width="4" height="14" fill="none" stroke="#333" stroke-width=".7"/>
<path d="M309 20 L314 20 L314 17 L318.5 22 L314 27 L314 24 L309 24 Z" fill="#3a7ad8" stroke="#0a2a8a" stroke-width=".7"/>
</svg>
<div class="t" style="left:926.6px;top:125.8px;font-size:14.4px">None</div>
<div class="t" style="left:1074.6px;top:125.9px;font-size:14px">2px</div>
<div class="a" style="left:1130px;top:125px;width:23px;height:17px;overflow:hidden"><div class="t" style="left:0.5px;top:0.9px;font-size:14px">0,20</div></div>

<!-- left dock -->
<div class="t" style="left:7px;top:166.5px;font-size:14.7px">Combo View</div>
<div class="a" style="left:5px;top:215px;width:396px;height:446px;background:#f5f5f4;border:1px solid #c5c2bd;border-radius:3px"></div>
<!-- tabs -->
<div class="a" style="left:68px;top:190px;width:51px;height:27px;background:linear-gradient(#f3f2f1,#dddbd8);border:1px solid #bab6b0;border-bottom:none;border-radius:3px 3px 0 0"></div>
<div class="t" style="left:76px;top:195.1px;font-size:13.7px">Tasks</div>
<div class="a" style="left:5px;top:186px;width:63px;height:32px;background:linear-gradient(#fdfdfd,#f4f4f4);border:1px solid #bab6b0;border-bottom:none;border-radius:3px 3px 0 0"></div>
<div class="t" style="left:12.5px;top:193.0px;font-size:15.1px">Project</div>
<!-- tree frame -->
<div class="a" style="left:6px;top:217px;width:392px;height:200px;background:#fff;border:1px solid #bcb8b3;border-radius:2px 3px 0 0"></div>
<div class="a" style="left:7px;top:218px;width:390px;height:25px;background:linear-gradient(#fbfbfb,#eeedec);border-bottom:1px solid #c3c0bb"></div>
<div class="t" style="left:11.5px;top:223.0px;font-size:15.1px">Labels &amp; Attributes</div>
<div class="t" style="left:10px;top:244.8px;font-size:15.3px">Application</div>
<div class="t" style="left:52.5px;top:264.8px;font-size:14.1px;font-weight:bold">Unnamed</div>
<div class="t" style="left:72px;top:283.7px;font-size:14px">Ranuras</div>
<div class="t" style="left:72.5px;top:303.1px;font-size:13.5px;font-weight:bold">Base</div>
<!-- splitter -->

<div class="a" style="left:199px;top:418px;width:1px;height:4px;background:#c9c6c2"></div>
<div class="a" style="left:202px;top:418px;width:1px;height:4px;background:#c9c6c2"></div>
<div class="a" style="left:205px;top:418px;width:1px;height:4px;background:#c9c6c2"></div>
<!-- property frame -->
<div class="a" style="left:6px;top:423px;width:393px;height:207px;background:#f5f5f5;border:1px solid #bcb8b3;border-radius:2px"></div>
<div class="a" style="left:8px;top:425px;width:389px;height:203px;background:#fff;border:1px solid #c3c0bb"></div>
<div class="a" style="left:9px;top:426px;width:387px;height:25px;background:linear-gradient(#fbfbfb,#eeedec);border-bottom:1px solid #c3c0bb"></div>
<div class="a" style="left:108px;top:426px;width:1px;height:24px;background:#d3d0cc"></div>
<div class="t" style="left:13.5px;top:430.8px;font-size:15.4px">Property</div>
<div class="t" style="left:113px;top:431.3px;font-size:14.8px">Value</div>
<!-- view/data tabs -->

<svg style="left:0;top:0" width="420" height="695">
<path d="M6.5 631.5 L17.5 655 Q19 657.5 22 657.5 L40 657.5 Q43 657.5 44.5 655 L54.5 631.5" fill="#efeeed" stroke="#3a3a3a" stroke-width="1"/>
<path d="M56.5 629.5 L67 656 Q68.5 658.5 71.5 658.5 L89 658.5 Q92 658.5 93.5 656 L102.5 629.5" fill="#fff" stroke="#3a3a3a" stroke-width="1"/>
</svg>
<div class="t" style="left:15px;top:634.9px;font-size:15px">View</div>
<div class="t" style="left:64px;top:636.5px;font-size:14.3px">Data</div>

<!-- viewport -->

<div class="a" style="left:407px;top:160px;width:804px;height:1px;background:#fff"></div>
<div class="a" style="left:407px;top:161px;width:804px;height:467px;background:linear-gradient(#343464,#9596a9)"></div>
<div class="a" style="left:407px;top:161px;width:804px;height:1px;background:#24245a"></div>
<div class="a" style="left:604px;top:156px;width:1px;height:4px;background:#c9c6c2"></div>
<div class="a" style="left:607px;top:156px;width:1px;height:4px;background:#c9c6c2"></div>
<div class="a" style="left:610px;top:156px;width:1px;height:4px;background:#c9c6c2"></div>
<div class="a" style="left:402px;top:408px;width:4px;height:1px;background:#c9c6c2"></div>
<div class="a" style="left:402px;top:411px;width:4px;height:1px;background:#c9c6c2"></div>
<div class="a" style="left:402px;top:414px;width:4px;height:1px;background:#c9c6c2"></div>


<!-- 3D scene -->
<svg style="left:0;top:0" width="1216" height="695">
<g stroke-linejoin="round">
<!-- main box -->
<path d="M596 320 L887 487 L887 562 L596 395 Z" fill="#858585"/>
<path d="M887 487 L1022 409 L1022 484 L887 562 Z" fill="#666666"/>
<path d="M731 241 L596 320 L887 487 L1022 409 Z" fill="#8f8f8f"/>
</g>
<g id="bump">
<path d="M660 305 L691 322 L691 337.5 L660 320.5 Z" fill="#858585"/>
<path d="M691 322 L762 281 L762 296.5 L691 337.5 Z" fill="#666666"/>
<path d="M731 264 L660 305 L691 322 L762 281 Z" fill="#8f8f8f" stroke="#000" stroke-width="1.6" stroke-linejoin="round"/>
<path d="M660 305 L660 320.5 M691 322 L691 337.5 M762 281 L762 296.5" stroke="#000" stroke-width="1.6"/>
</g>
<g transform="translate(97 56)">
<path d="M660 305 L691 322 L691 337.5 L660 320.5 Z" fill="#858585"/>
<path d="M691 322 L762 281 L762 296.5 L691 337.5 Z" fill="#666666"/>
<path d="M731 264 L660 305 L691 322 L762 281 Z" fill="#8f8f8f" stroke="#000" stroke-width="1.6" stroke-linejoin="round"/>
<path d="M660 305 L660 320.5 M691 322 L691 337.5 M762 281 L762 296.5" stroke="#000" stroke-width="1.6"/>
</g>
<g transform="translate(194 112)">
<path d="M660 305 L691 322 L691 337.5 L660 320.5 Z" fill="#858585"/>
<path d="M691 322 L762 281 L762 296.5 L691 337.5 Z" fill="#666666"/>
<path d="M731 264 L660 305 L691 322 L762 281 Z" fill="#8f8f8f" stroke="#000" stroke-width="1.6" stroke-linejoin="round"/>
<path d="M660 305 L660 320.5 M691 322 L691 337.5 M762 281 L762 296.5" stroke="#000" stroke-width="1.6"/>
</g>
<g fill="none" stroke="#000" stroke-width="1.6" stroke-linejoin="round">
<path d="M596 320 L731 241 L1022 409 L887 487 Z"/>
<path d="M887 487 L887 562 L1022 484 L1022 409"/>
<path d="M702 456 L887 562"/>
</g>
<!-- axes -->
<path d="M596 395 L701 455" stroke="#a01c1c" stroke-width="1.5"/>
<path d="M718.4 465.3 L699.4 456.7 L702.2 452.1 Z" fill="#8a2222" stroke="#6a1010" stroke-width=".6"/>
<path d="M596 395 L596 272" stroke="#1c1c8c" stroke-width="1.6"/>
<path d="M595.6 251 L600 272.8 L591 272.8 Z" fill="#222288" stroke="#10106a" stroke-width=".6"/>
<!-- axis cross -->
<path d="M1188.1 604.5 L1188.1 589.4" stroke="#1a1a9a" stroke-width="1.6"/>
<path d="M1186 594.5 L1190.2 594.5" stroke="#1a1a9a" stroke-width="1.4"/>
<path d="M1188.1 604.5 L1197.6 599.3" stroke="#10a010" stroke-width="1.4"/>
<path d="M1188.1 604.5 L1200.2 612.3" stroke="#a01c1c" stroke-width="1.5"/>
<path d="M1191.5 583.5 L1196 583.5 L1191.5 589.5 L1196 589.5" fill="none" stroke="#000" stroke-width="1"/>
<path d="M1200 593 L1202.5 596 L1205 593 M1202.5 596 L1202.5 599.5" fill="none" stroke="#000" stroke-width="1"/>
<path d="M1203.5 606.5 L1208.5 612.5 M1208.5 606.5 L1203.5 612.5" fill="none" stroke="#000" stroke-width="1"/>
</svg>

<!-- doc tabs -->
<div class="a" style="left:407px;top:628px;width:804px;height:30px;background:#f2f1f0"></div>

<div class="a" style="left:407px;top:628px;width:111px;height:30px;background:linear-gradient(#e4e3e1,#f1f0ef);border:1px solid #c6c3be;border-top:none;border-radius:0 0 4px 4px"></div>
<div class="t" style="left:415.5px;top:636.5px;font-size:14.8px">Start page</div>
<div class="a" style="left:517px;top:628px;width:156px;height:33px;background:linear-gradient(#fdfdfd,#f7f7f6);border:1px solid #c6c3be;border-top:none;border-radius:0 0 4px 4px"></div>
<div class="t" style="left:548.5px;top:637.6px;font-size:14.5px">Unnamed : 1*</div>

<!-- status bar -->
<div class="a" style="left:4px;top:661px;width:1207px;height:1px;background:#d8d5d0"></div>
<div class="a" style="left:4px;top:662px;width:1207px;height:1px;background:#fff"></div>
<div class="t" style="left:1067.5px;top:669.1px;font-size:14.4px">87.95 x 51.09 mm</div>


<!-- dock icons -->
<svg style="left:0;top:0" width="700" height="695">
<defs>
<radialGradient id="gBlob" gradientUnits="userSpaceOnUse" cx="59" cy="284" r="13"><stop offset="0" stop-color="#80b0f0"/><stop offset=".35" stop-color="#2a60d0"/><stop offset="1" stop-color="#0a2090"/></radialGradient>
<linearGradient id="gX" x1="0" y1="0" x2="0" y2="1"><stop offset="0" stop-color="#6e6e6e"/><stop offset="1" stop-color="#4a4a4a"/></linearGradient>
</defs>
<!-- float -->
<path d="M371.5 168.5 L379.5 168.5 L380.5 169.5 L380.5 177.5 L379.5 178.5 L371.5 178.5 L370.5 177.5 L370.5 169.5 Z" fill="none" stroke="#67645f" stroke-width="1.1"/>
<rect x="374.8" y="170.5" width="4" height="4.2" rx=".8" fill="none" stroke="#67645f" stroke-width="1"/>
<rect x="372.4" y="172.4" width="4.2" height="4.2" rx=".8" fill="#f2f1f0" stroke="#67645f" stroke-width="1"/>
<!-- close -->
<path d="M388.3 168.5 L396.5 168.5 L397.5 169.5 L397.5 177.5 L396.5 178.5 L388.3 178.5 L387.3 177.5 L387.3 169.5 Z" fill="none" stroke="#67645f" stroke-width="1.1"/>
<path d="M389.6 170.4 L395.4 176.2 M395.4 170.4 L389.6 176.2" stroke="#5d5a55" stroke-width="2.1"/>
<!-- tree arrows -->
<path d="M16 268.3 L23.1 268.3 L19.5 273.8 Z" fill="#8a8a8a" stroke="#6a6a6a" stroke-width=".5"/>
<path d="M36.3 287.3 L42.2 290.4 L36.3 293.6 Z" fill="#8a8a8a" stroke="#6a6a6a" stroke-width=".5"/>
<!-- doc icon -->
<path d="M33.6 263.7 L41.5 263.7 L43.6 265.8 L43.6 278.2 L33.6 278.2 Z" fill="#fff" stroke="#000" stroke-width="1"/>
<path d="M35.5 266.2 H39.5 M35.5 268.3 H41.5 M35.5 270.4 H40" stroke="#222" stroke-width=".8"/>
<path d="M38.5 271.8 A2.5 2.5 0 1 0 38.5 276.5 Z" fill="#40d0e8" stroke="#0a3a4a" stroke-width=".5"/>
<rect x="38.5" y="272.6" width="3.2" height="2.4" fill="#e060e0"/>
<!-- blob -->
<path d="M58 296 L64.5 296.5 L62 297.8 L58 297.8 Z" fill="#444"/>
<ellipse cx="60.6" cy="287" rx="4.8" ry="4.5" fill="url(#gBlob)"/>
<ellipse cx="55.2" cy="292.5" rx="4.8" ry="4.8" fill="url(#gBlob)"/>
<path d="M52.5 289 L57.5 283.5 L64 290 L58.5 295.5 Z" fill="url(#gBlob)"/>
<!-- base icon -->
<rect x="58.2" y="301.4" width="7.6" height="8.4" fill="#7060e0" stroke="#000" stroke-width="1"/>
<path d="M60.5 302.5 L60.5 307 L63.5 307 L63.5 302.5" fill="none" stroke="#000" stroke-width=".9"/>
<path d="M53.5 302.5 L58.5 302.5 L58.5 307 L56.5 308.5 L53 307 Z" fill="#c8a868" stroke="#000" stroke-width=".6"/>
<path d="M50.3 309 L53 307.2 L59.3 307.5 L59.3 316.3 L53 316.3 L50.3 314.3 Z" fill="#50c850" stroke="#000" stroke-width="1"/>
<path d="M53 309.5 L59.3 309.5 M53 309.5 L53 316.3" stroke="#000" stroke-width=".8"/>
<!-- start page close -->
<path d="M494.3 639.3 L503.6 648.5 M503.6 639.3 L494.3 648.5" stroke="url(#gX)" stroke-width="3.1"/>
<!-- freecad icon -->
<path d="M524.8 636.9 L532 636.9 L532 639.8 L528.4 639.8 L528.4 642 L531 642 L531 644.6 L528.4 644.6 L528.4 649.5 L524.8 649.5 Z" fill="#ff2a0a" stroke="#c81000" stroke-width=".4"/>
<g transform="translate(533.4 645.3)">
<circle r="5" fill="#fff" opacity=".8"/>
<circle r="3.9" fill="#2a5ad8"/>
<g fill="#0a2aa0"><rect x="-1" y="-5.4" width="2" height="10.8"/><rect x="-1" y="-5.4" width="2" height="10.8" transform="rotate(45)"/><rect x="-1" y="-5.4" width="2" height="10.8" transform="rotate(90)"/><rect x="-1" y="-5.4" width="2" height="10.8" transform="rotate(135)"/></g>
<circle r="1.7" fill="#fff"/>
</g>
<!-- unnamed close -->
<path d="M650.3 640.4 L659.7 649.6 M659.7 640.4 L650.3 649.6" stroke="url(#gX)" stroke-width="3.1"/>
</svg>
<svg style="left:1193px;top:671px" width="22" height="20">
<g fill="#d6d3cf"><rect x="15" y="8" width="1.2" height="1.2"/><rect x="12" y="11" width="1.2" height="1.2"/><rect x="15" y="11" width="1.2" height="1.2"/><rect x="9" y="14" width="1.2" height="1.2"/><rect x="12" y="14" width="1.2" height="1.2"/><rect x="15" y="14" width="1.2" height="1.2"/><rect x="6" y="17" width="1.2" height="1.2"/><rect x="9" y="17" width="1.2" height="1.2"/><rect x="12" y="17" width="1.2" height="1.2"/><rect x="15" y="17" width="1.2" height="1.2"/></g>
</svg>

</body></html>
